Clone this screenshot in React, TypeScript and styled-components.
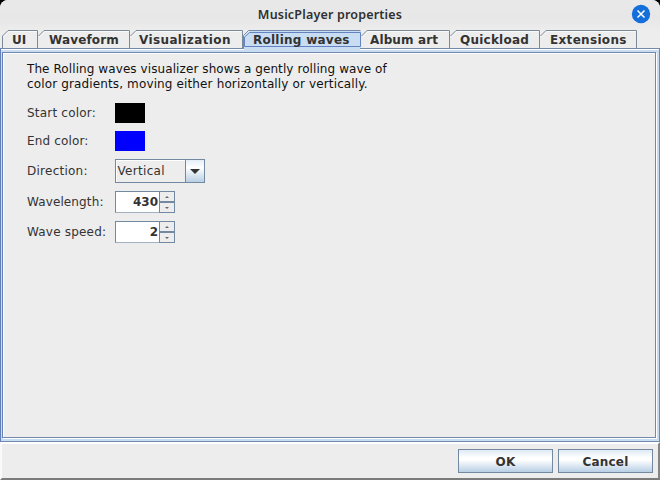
import React from "react";
import styled, { createGlobalStyle } from "styled-components";

const Global = createGlobalStyle`
  * { box-sizing: border-box; }
  body { margin: 0; background: #000; overflow: hidden; }
`;

const Window = styled.div`
  width: 660px;
  height: 480px;
  display: flex;
  flex-direction: column;
  overflow: hidden;
  background: #ededed;
  border-radius: 8px 8px 0 0;
  color: #333;
  font: 12px/15px "DejaVu Sans", sans-serif;
`;

const TitleBar = styled.header`
  height: 30px;
  flex: none;
  display: grid;
  grid-template-columns: 30px 1fr 30px;
  align-items: center;
  background: linear-gradient(#e9e9e9, #e7e7e7 60%, #ececec);
`;

const Title = styled.h1`
  margin: 0;
  grid-column: 2;
  text-align: center;
  font: 600 12.5px/28px "Noto Sans", sans-serif;
  letter-spacing: 0.18px;
  color: #303030;
`;

const Text = styled.span<{ $gap?: number }>`
  letter-spacing: ${(p) => p.$gap ?? 0}px;
  white-space: nowrap;
`;

const CloseIcon = styled.svg`
  width: 20px;
  height: 20px;
  margin-left: 1px;
  margin-top: -2px;
`;

const TabStrip = styled.nav`
  height: 18px;
  flex: none;
  display: flex;
  padding-left: 2px;
`;

const TabItem = styled.div<{ $width: number; $pad: number }>`
  width: ${(p) => p.$width}px;
  height: 18px;
  display: grid;
  grid-template-rows: 18px;
  font-weight: bold;
  line-height: 20px;
  & > * { grid-area: 1 / 1; }
  & > span { padding-left: ${(p) => p.$pad}px; }
`;

const TabShape = styled.svg`
  display: block;
  overflow: visible;
`;

const Pane = styled.main`
  height: 394px;
  flex: none;
  border: 1px solid #7289ad;
  border-top: 0;
  border-left-color: #6480b8;
  background: #c8ddf2;
  padding: 0 3px 3px 1px;
  display: flex;
  flex-direction: column;
`;

/* Top edge of the pane, left open under the active tab. */
const PaneTop = styled.div<{ $from: number; $to: number }>`
  height: 4px;
  flex: none;
  margin: 0 -3px 0 -1px;
  background:
    linear-gradient(90deg, #7289ad ${(p) => p.$from}px, #c8ddf2 ${(p) => p.$from}px ${(p) => p.$to}px, #7289ad ${(p) => p.$to}px) 0 0 / 100% 1px no-repeat,
    linear-gradient(90deg, #fff ${(p) => p.$from}px, #c8ddf2 ${(p) => p.$from}px ${(p) => p.$to}px, #fff ${(p) => p.$to}px) 0 1px / 100% 1px no-repeat;
`;

const Page = styled.section`
  flex: 1;
  border: 1px solid #7289ad;
  border-left-color: #6480b8;
  box-shadow: 1px 1px 0 #fff, inset 1px 1px 0 #fff;
  background: #ededed;
  padding: 9px 0 0 24px;
`;

const Description = styled.p`
  margin: 0;
  color: #111;
  display: flex;
  flex-direction: column;
`;

const Form = styled.div`
  margin-top: 7px;
  display: grid;
  grid-template-columns: 88px auto;
  grid-template-rows: 28px 28px 32px 30px 30px;
  align-items: center;
`;

const Swatch = styled.div<{ $color: string }>`
  width: 30px;
  height: 20px;
  background: ${(p) => p.$color};
`;

const Combo = styled.div`
  width: 90px;
  height: 24px;
  display: flex;
  border: 1px solid #7289a0;
  box-shadow: inset 1px 1px 0 #fff;
  line-height: 22px;
  padding-left: 1.5px;
`;

const ComboButton = styled.span`
  width: 19px;
  margin-left: auto;
  border-left: 1px solid #7289a0;
  background: linear-gradient(#e4eef8, #fff 35%, #b8cfe5);
  display: grid;
  place-items: center;
`;

const Spinner = styled.div`
  width: 60px;
  height: 22px;
  display: flex;
  border: 1px solid #7289a0;
  border-right: 0;
  border-bottom-color: #a3b1c0;
  background: #fff;
`;

const SpinValue = styled.b`
  flex: 1;
  text-align: right;
  padding-right: 1px;
  line-height: 20px;
`;

const SpinButtons = styled.div`
  width: 16px;
  height: 22px;
  margin-top: -1px;
  display: grid;
  grid-template-rows: 11px 11px;
`;

const SpinButton = styled.span`
  border: 1px solid #7289a0;
  background: #ededed;
  display: grid;
  place-items: center;
`;

const Footer = styled.footer`
  flex: 1;
  border: 2px solid;
  border-color: #fff #858585 #7b7b7b #fafafa;
  display: flex;
  justify-content: flex-end;
  gap: 5px;
  padding: 5px 5px 0 0;
`;

const Button = styled.button`
  width: 95px;
  height: 24px;
  padding: 2px 0 0;
  border: 1px solid #7289a0;
  border-radius: 0;
  background: linear-gradient(#dfeaf5, #fff 35%, #fff 45%, #b8cfe5);
  color: #333;
  font: bold 12px/20px "DejaVu Sans", sans-serif;
  letter-spacing: 0.2px;
`;

type TabProps = { label: string; width: number; pad: number; gap?: number; active?: boolean; first?: boolean };

function Tab({ label, width: w, pad, gap, active, first }: TabProps) {
  return (
    <TabItem $width={w} $pad={pad}>
      <TabShape width={w} height={18} fill="none">
        {active ? (
          <>
            <path d={`M1 18V6.5L6.5 1H${w}V18Z`} fill="#c8ddf2" />
            <path d={`M.5 18V5.5L5.5 .5H${w - 0.5}`} stroke="#7289ad" />
            <path d={`M1.5 16.5V7L6.5 2.5H${w - 0.5}V16.5Z`} stroke="#6382bf" />
          </>
        ) : (
          <>
            {first && <path d="M.5 18V6" stroke="#7a8a99" />}
            <path d={`M.5 6L6 .5H${w - 0.5}V18`} stroke="#7a8a99" />
            <path d={`M1.5 7L7 1.5H${w - 1}`} stroke="#fafafa" />
          </>
        )}
      </TabShape>
      <Text $gap={gap}>{label}</Text>
    </TabItem>
  );
}

const SpinArrow = ({ up }: { up?: boolean }) => (
  <svg width="4" height="2"><path d={up ? "M0 2L2 0L4 2Z" : "M0 0H4L2 2Z"} fill="#666" /></svg>
);

function NumberSpinner({ value }: { value: number }) {
  return (
    <Spinner>
      <SpinValue>{value}</SpinValue>
      <SpinButtons>
        <SpinButton><SpinArrow up /></SpinButton>
        <SpinButton><SpinArrow /></SpinButton>
      </SpinButtons>
    </Spinner>
  );
}

export default function App() {
  return (
    <>
      <Global />
      <Window>
        <TitleBar>
          <Title>MusicPlayer properties</Title>
          <CloseIcon viewBox="0 0 20 20">
            <circle cx="10" cy="10" r="9.2" fill="#156fda" />
            <path d="M6.5 6.5L13.5 13.5M13.5 6.5L6.5 13.5" stroke="#fff" strokeWidth="1.5" />
          </CloseIcon>
        </TitleBar>
        <TabStrip>
          <Tab label="UI" width={36} pad={10} first />
          <Tab label="Waveform" width={92} pad={11} gap={0.14} />
          <Tab label="Visualization" width={113} pad={9} gap={0.38} />
          <Tab label="Rolling waves" width={118} pad={10} gap={0.25} active />
          <Tab label="Album art" width={89} pad={9} gap={0.12} />
          <Tab label="Quickload" width={90} pad={10} gap={0.23} />
          <Tab label="Extensions" width={97} pad={10} gap={0.32} />
        </TabStrip>
        <Pane>
          <PaneTop $from={243} $to={359} />
          <Page>
            <Description>
              <Text $gap={0.087}>The Rolling waves visualizer shows a gently rolling wave of</Text>
              <Text $gap={0.135}>color gradients, moving either horizontally or vertically.</Text>
            </Description>
            <Form>
              <Text $gap={0.2}>Start color:</Text>
              <Swatch $color="#000" />
              <Text $gap={0.15}>End color:</Text>
              <Swatch $color="#00f" />
              <Text $gap={0.25}>Direction:</Text>
              <Combo>
                <Text $gap={0.3}>Vertical</Text>
                <ComboButton>
                  <svg width="10" height="5"><path d="M0 0H10L5 5Z" fill="#333" /></svg>
                </ComboButton>
              </Combo>
              <Text $gap={0.12}>Wavelength:</Text>
              <NumberSpinner value={430} />
              <Text $gap={0.2}>Wave speed:</Text>
              <NumberSpinner value={2} />
            </Form>
          </Page>
        </Pane>
        <Footer>
          <Button>OK</Button>
          <Button>Cancel</Button>
        </Footer>
      </Window>
    </>
  );
}
